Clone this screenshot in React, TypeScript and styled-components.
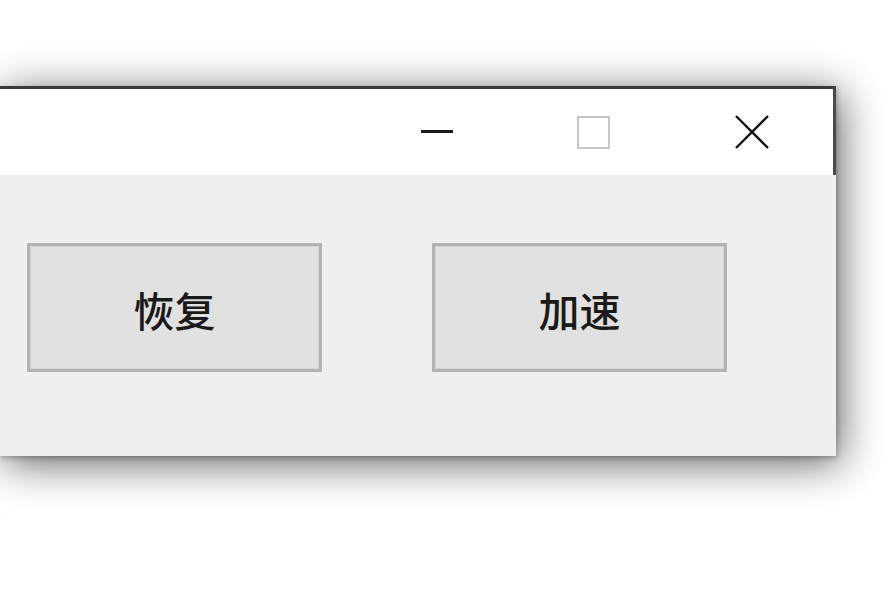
import React from "react";
import styled, { createGlobalStyle } from "styled-components";

const Global = createGlobalStyle`
  html, body { margin: 0; padding: 0; background: #ffffff; }
  body { width: 890px; height: 610px; overflow: hidden; font-family: "Noto Sans CJK SC", "Noto Sans", sans-serif; }
`;

const Stage = styled.div`
  width: 890px;
  height: 610px;
  padding-top: 86px;
  box-sizing: border-box;
  overflow: hidden;
`;

const Window = styled.div`
  width: 836px;
  display: flex;
  flex-direction: column;
  box-shadow: 4px 7px 40px rgba(0, 0, 0, 0.62), 1px 2px 5px rgba(0, 0, 0, 0.25);
`;

const TitleBar = styled.div`
  height: 89px;
  box-sizing: border-box;
  background: #ffffff;
  border-top: 3px solid #3a3a3a;
  border-right: 3px solid #4a4a4a;
  display: flex;
  justify-content: flex-end;
  align-items: stretch;
`;

const Caption = styled.div<{ $w: number }>`
  width: ${(p) => p.$w}px;
  display: flex;
  align-items: center;
  justify-content: center;
`;

const Body = styled.div`
  height: 281px;
  background: #f0f0f0;
  display: flex;
  align-items: flex-start;
  gap: 110px;
  padding: 68px 0 0 27px;
  box-sizing: border-box;
`;

const Button = styled.div`
  width: 295px;
  height: 129px;
  box-sizing: border-box;
  background: #e1e1e1;
  border: 3px solid #b3b3b3;
  box-shadow: inset 0 0 0 1px #d2d2d2;
  display: flex;
  align-items: center;
  justify-content: center;
  font-family: "Noto Sans CJK SC", "Noto Sans", sans-serif;
  font-size: 41px;
  font-weight: 500;
  color: #1a1a1a;
  padding-top: 3px;
`;

export default function App() {
  return (
    <>
      <Global />
      <Stage>
        <Window>
          <TitleBar>
            <Caption $w={156}>
              <svg width="32" height="32" viewBox="0 0 32 32">
                <rect x="0" y="14" width="32" height="3" fill="#1a1a1a" />
              </svg>
            </Caption>
            <Caption $w={156}>
              <svg width="33" height="33" viewBox="0 0 33 33">
                <rect x="1" y="1" width="31" height="31" fill="none" stroke="#c6c6c6" strokeWidth="2" />
              </svg>
            </Caption>
            <Caption $w={162}>
              <svg width="34" height="34" viewBox="0 0 34 34">
                <path d="M1 1 L33 33 M33 1 L1 33" stroke="#111" strokeWidth="2.4" fill="none" />
              </svg>
            </Caption>
          </TitleBar>
          <Body>
            <Button>恢复</Button>
            <Button>加速</Button>
          </Body>
        </Window>
      </Stage>
    </>
  );
}
